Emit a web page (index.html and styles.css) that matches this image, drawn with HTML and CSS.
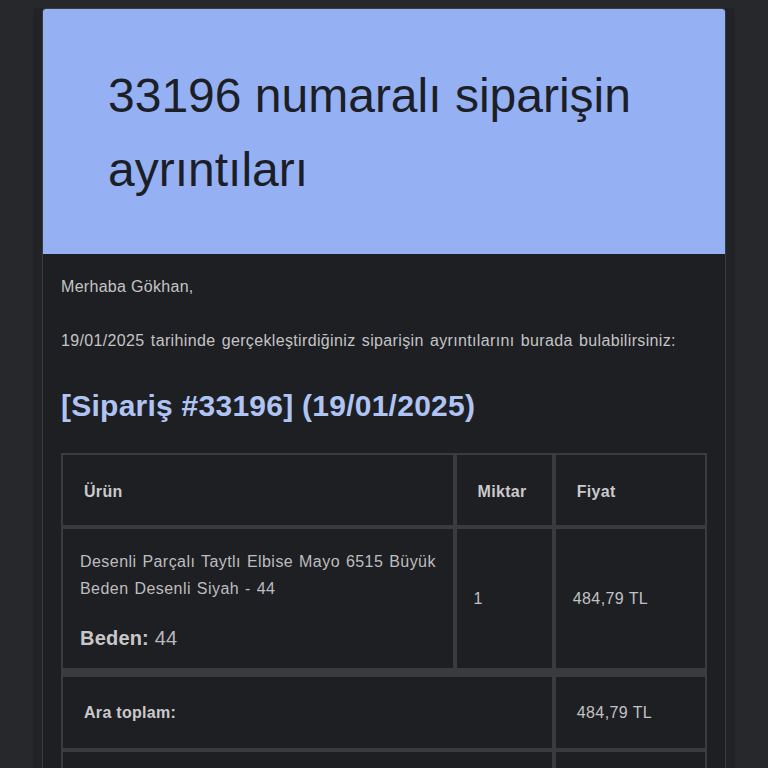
FILE: index.html
```html
<!DOCTYPE html>
<html lang="tr">
<head>
<meta charset="utf-8">
<title>33196 numaralı siparişin ayrıntıları</title>
<link rel="stylesheet" href="styles.css">
</head>
<body>
<div class="page">
  <div class="mail">
    <div class="mail-header">
      <h1 class="title">33196 numaralı siparişin ayrıntıları</h1>
    </div>
    <div class="mail-body">
      <p class="greet">Merhaba Gökhan,</p>
      <p class="intro">19/01/2025 tarihinde gerçekleştirdiğiniz siparişin ayrıntılarını burada bulabilirsiniz:</p>
      <h2 class="order-title">[Sipariş #33196] (19/01/2025)</h2>
      <table class="order">
        <colgroup>
          <col class="c-prod">
          <col class="c-qty">
          <col class="c-price">
        </colgroup>
        <thead>
          <tr>
            <th>Ürün</th>
            <th>Miktar</th>
            <th>Fiyat</th>
          </tr>
        </thead>
        <tbody>
          <tr>
            <td class="prod">
              <div class="prod-name">Desenli Parçalı Taytlı Elbise Mayo 6515 Büyük Beden Desenli Siyah - 44</div>
              <div class="meta"><strong>Beden:</strong> 44</div>
            </td>
            <td class="num">1</td>
            <td class="num">484,79 TL</td>
          </tr>
        </tbody>
        <tfoot>
          <tr>
            <th colspan="2">Ara toplam:</th>
            <td>484,79 TL</td>
          </tr>
          <tr>
            <th colspan="2">&nbsp;</th>
            <td>&nbsp;</td>
          </tr>
        </tfoot>
      </table>
    </div>
  </div>
</div>
</body>
</html>
```

FILE: styles.css
```css
html, body {
  margin: 0;
  padding: 0;
  background: #27282b;
}
body {
  font-family: "Liberation Sans", Arial, sans-serif;
  overflow: hidden;
  height: 768px;
}
.page {
  padding: 8px 0 0 42px;
}
.mail {
  width: 682px;
  background: #1e1f23;
  border: 1px solid #3a3b3f;
  border-radius: 4px 4px 0 0;
  box-shadow: -9px 0 0 #222326, 9px 0 0 #222326;
}
.mail-header {
  background: #96b1f3;
  border-radius: 3px 3px 0 0;
  padding: 50px 40px 47px 65px;
}
.title {
  margin: 0;
  font-weight: 400;
  font-size: 48px;
  line-height: 74px;
  color: #1c1f27;
}
.mail-body {
  padding: 22px 18px 0;
}
.greet, .intro {
  margin: 0;
  font-size: 16px;
  line-height: 22px;
  color: #c4c4c6;
  letter-spacing: 0.3px;
}
.intro {
  margin-top: 32px;
  letter-spacing: 0.35px;
  word-spacing: 1.5px;
}
.order-title {
  margin: 34px 0 0;
  font-size: 30px;
  line-height: 39px;
  font-weight: 700;
  color: #b0c4f4;
  letter-spacing: 0.25px;
}
.order {
  margin-top: 28px;
  width: 100%;
  table-layout: fixed;
  border-collapse: separate;
  border-spacing: 0;
}
.c-prod { width: 393px; }
.c-qty { width: 99px; }
.c-price { width: 153px; }
.order th, .order td {
  border: 2px solid #3a3b3f;
  text-align: left;
  vertical-align: middle;
  font-size: 16px;
  line-height: 22px;
  color: #c2c2c4;
  padding: 0 17px;
  letter-spacing: 0.4px;
}
.order th {
  font-weight: 700;
  color: #cacacc;
  padding-left: 21px;
  letter-spacing: 0.3px;
}
.order thead th {
  padding-top: 26px;
  padding-bottom: 22px;
}
.order td.prod {
  padding: 19px 6px 18px 17px;
  letter-spacing: 0.45px;
  word-spacing: 1px;
}
.prod-name {
  line-height: 27px;
  color: #bdbdbf;
}
.meta {
  margin-top: 24px;
  font-size: 20px;
  line-height: 24px;
  color: #b8b8ba;
  letter-spacing: 0.2px;
  word-spacing: 0;
}
.meta strong {
  color: #c8c8ca;
}
.order tfoot th, .order tfoot td {
  padding-top: 25px;
  padding-bottom: 24px;
}
.order tfoot td {
  padding-left: 21px;
}
.order tfoot tr:first-child th,
.order tfoot tr:first-child td {
  border-top-width: 7px;
}
```
